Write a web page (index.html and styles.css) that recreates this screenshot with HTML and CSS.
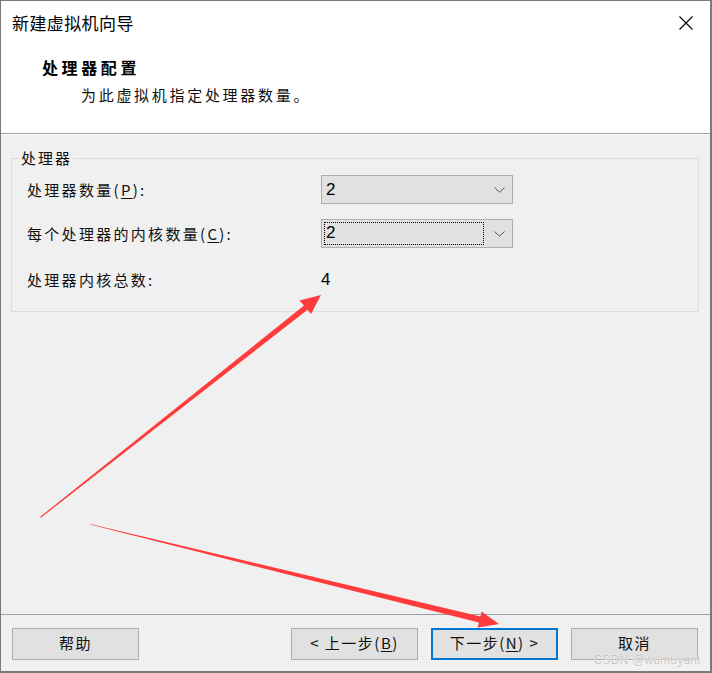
FILE: index.html
```html
<!DOCTYPE html>
<html lang="zh-CN">
<head>
<meta charset="utf-8">
<title>新建虚拟机向导</title>
<link rel="stylesheet" href="styles.css">
</head>
<body>
<div class="window">
  <div class="titlebar">
    <span class="title">新建虚拟机向导</span>
    <svg class="close" width="14" height="14" viewBox="0 0 14 14"><path d="M0.5 0.5 L13.5 13.5 M13.5 0.5 L0.5 13.5" stroke="#000" stroke-width="1.1" fill="none"/></svg>
  </div>
  <div class="header">
    <div class="heading">处理器配置</div>
    <div class="subtitle">为此虚拟机指定处理器数量。</div>
  </div>
  <div class="main">
    <fieldset class="group">
      <legend class="legend">处理器</legend>
      <div class="grid">
        <div class="label">处理器数量(<u>P</u>):</div>
        <div class="select"><span class="value">2</span><svg class="chev" width="11" height="6" viewBox="0 0 11 6"><path d="M0.5 0.5 L5.5 5.2 L10.5 0.5" stroke="#555" stroke-width="1" fill="none"/></svg></div>
        <div class="label">每个处理器的内核数量(<u>C</u>):</div>
        <div class="select"><span class="value focus">2</span><svg class="chev" width="11" height="6" viewBox="0 0 11 6"><path d="M0.5 0.5 L5.5 5.2 L10.5 0.5" stroke="#555" stroke-width="1" fill="none"/></svg></div>
        <div class="label row3">处理器内核总数:</div>
        <div class="total row3">4</div>
      </div>
    </fieldset>
  </div>
  <div class="footer">
    <button class="btn">帮助</button>
    <div class="spacer"></div>
    <button class="btn">&lt; 上一步(<u>B</u>)</button>
    <button class="btn default">下一步(<u>N</u>) &gt;</button>
    <button class="btn">取消</button>
  </div>
  <div class="watermark">CSDN @wumuyanl</div>
  <svg class="arrows" width="712" height="673" viewBox="0 0 712 673">
    <polygon fill="#ff3b3b" points="40,517 304,305.5 299.5,300.5 321,295 311,314 307.5,309.8 40.8,517.8"/>
    <polygon fill="#ff3b3b" points="90,524 480.5,616.5 481.5,611.5 499,624 477.7,627.5 478.9,622.5 90,524.6"/>
  </svg>
</div>
</body>
</html>
```
FILE: styles.css
```css
* { box-sizing: border-box; }
html, body { margin: 0; padding: 0; background: #f0f0f0; }
body {
  font-family: "Noto Sans CJK SC", "Noto Sans", sans-serif;
  color: #000;
}
.window {
  position: relative;
  width: 712px;
  height: 673px;
  border: 1px solid #7a7a7a;
  border-right-width: 2px;
  border-bottom-width: 2px;
  display: flex;
  flex-direction: column;
  background: #f0f0f0;
  overflow: hidden;
}
.titlebar {
  height: 44px;
  flex: none;
  background: #fff;
  display: flex;
  align-items: center;
  padding-left: 11px;
  padding-right: 17px;
}
.title {
  font-size: 17px;
  line-height: 20px;
  flex: 1;
  letter-spacing: 0.4px;
}
.close { display: block; margin-top: -1px; }
.header {
  height: 89px;
  flex: none;
  background: #fff;
  border-bottom: 1px solid #a0a0a0;
  padding-left: 41px;
  padding-top: 11px;
}
.heading {
  font-size: 16px;
  font-weight: bold;
  line-height: 22px;
  letter-spacing: 3.6px;
}
.subtitle {
  font-size: 15px;
  line-height: 20px;
  margin-top: 7px;
  padding-left: 39px;
  letter-spacing: 2.7px;
  color: #111;
}
.main {
  flex: 1;
  background: #f0f0f0;
  border-top: 1px solid #fff;
  padding: 13px 11px 0 10px;
}
.group {
  margin: 0;
  border: 1px solid #dcdcdc;
  padding: 7px 15px 19px 15px;
  min-width: 0;
}
.legend {
  font-size: 15px;
  line-height: 20px;
  padding: 0 1px;
  margin-left: -7px;
  letter-spacing: 2px;
  color: #111;
}
.grid {
  display: grid;
  grid-template-columns: 294px 192px;
  grid-template-rows: 29px 29px 29px;
  row-gap: 15px;
  align-items: center;
}
.label {
  font-size: 15px;
  letter-spacing: 2.3px;
  line-height: 20px;
  color: #111;
}
.label u, .btn u { text-decoration-thickness: 1px; text-underline-offset: 2px; }
.row3 { margin-top: 4px; }
.select {
  height: 29px;
  border: 1px solid #adadad;
  background: #e1e1e1;
  display: flex;
  align-items: center;
  padding: 0 7px 0 2px;
}
.value {
  flex: 1;
  font-family: "Liberation Sans", "Noto Sans", sans-serif;
  font-size: 17px;
  line-height: 21px;
  padding-left: 2px;
}
.value.focus {
  flex: none;
  width: 160px;
  height: 23px;
  outline: 1px dotted #000;
  outline-offset: -1px;
  margin-right: 10px;
}
.chev { display: block; flex: none; }
.total {
  font-family: "Liberation Sans", "Noto Sans", sans-serif;
  font-size: 17px;
  line-height: 20px;
}
.footer {
  height: 57px;
  flex: none;
  border-top: 1px solid #a0a0a0;
  display: flex;
  align-items: flex-start;
  padding: 13px 12px 0 11px;
  gap: 13px;
  background: #f0f0f0;
}
.spacer { flex: 1; }
.btn {
  width: 127px;
  height: 32px;
  border: 1px solid #adadad;
  background: #e1e1e1;
  font-family: "Noto Sans CJK SC", "Noto Sans", sans-serif;
  font-size: 15px;
  line-height: 20px;
  letter-spacing: 1.5px;
  color: #111;
  padding: 0 0 3px 0;
  margin: 0;
}
.btn.default {
  border: 2px solid #0078d7;
}
.watermark {
  position: absolute;
  right: 10px;
  bottom: 4px;
  font-family: "Liberation Sans", sans-serif;
  font-size: 12px;
  color: #c4c4c4;
  text-shadow: 0 0 1px #fff, 0 0 1px #fff;
  letter-spacing: 0.2px;
}
.arrows {
  position: absolute;
  left: -1px;
  top: -1px;
  pointer-events: none;
}
```
